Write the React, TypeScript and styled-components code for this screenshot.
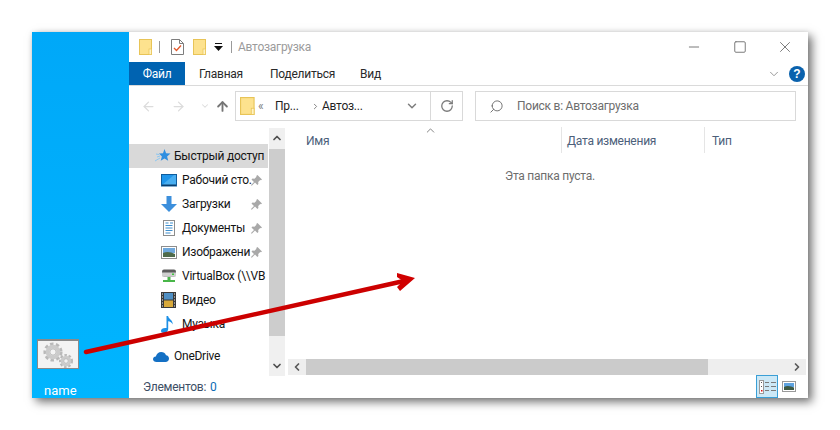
import React from 'react';
import styled, { createGlobalStyle } from 'styled-components';
import { ChevronDown, ChevronUp, ChevronLeft, ChevronRight, ArrowLeft, ArrowRight, ArrowUp, RotateCw, Search, Minus, Square, X } from 'lucide-react';

const GlobalStyle = createGlobalStyle`
  html, body {
    margin: 0;
    padding: 0;
    background: #fff;
  }
  body {
    font-family: Roboto, 'Noto Sans', sans-serif;
    font-size: 12px;
    letter-spacing: -0.25px;
    color: #1a1a1a;
  }
`;

const Page = styled.div`
  position: relative;
  width: 840px;
  height: 430px;
  padding: 32px;
  box-sizing: border-box;
  overflow: hidden;
`;

const Frame = styled.div`
  display: flex;
  width: 776px;
  height: 366px;
  box-shadow: 4px 4px 9px rgba(0, 0, 0, 0.55), 0 0 5px rgba(0, 0, 0, 0.08);
`;

const Desktop = styled.div`
  width: 97px;
  flex: none;
  display: flex;
  flex-direction: column;
  align-items: flex-start;
  justify-content: flex-end;
  padding: 0 0 0 5px;
  box-sizing: border-box;
  background: linear-gradient(#00a8f8, #00b5ff);
`;

const Tile = styled.div`
  width: 42px;
  height: 30px;
  box-sizing: border-box;
  background: #f3f3f3;
  border: 1px solid #8a8a8a;
  border-top-width: 2px;
  display: flex;
  align-items: center;
  justify-content: center;
`;

const TileName = styled.div`
  margin: 14px 0 0 7px;
  height: 15px;
  line-height: 15px;
  font-size: 13px;
  letter-spacing: 0;
  color: #fff;
`;

const Explorer = styled.div`
  flex: 1;
  min-width: 0;
  display: flex;
  flex-direction: column;
  background: #fff;
`;

const TitleBar = styled.div`
  height: 30px;
  flex: none;
  display: flex;
  align-items: center;
  padding-left: 10px;
`;

const QuickIcon = styled.span<{ $gap?: number }>`
  display: inline-flex;
  margin-right: ${(p) => p.$gap ?? 0}px;
`;

const Divider = styled.span<{ $gap: number }>`
  width: 1px;
  height: 12px;
  background: #9a9a9a;
  margin-right: ${(p) => p.$gap}px;
`;

const WindowTitle = styled.span`
  color: #9b9b9b;
  flex: 1;
`;

const WindowControls = styled.div`
  display: flex;
  align-items: center;
  color: #7a7a7a;
`;

const ControlButton = styled.span`
  width: 45.5px;
  height: 30px;
  display: flex;
  align-items: center;
  justify-content: center;
  margin-top: -1px;
`;

const Ribbon = styled.div`
  height: 23px;
  flex: none;
  display: flex;
  align-items: stretch;
  border-bottom: 1px solid #dadada;
`;

const RibbonTab = styled.span<{ $active?: boolean; $width: number }>`
  width: ${(p) => p.$width}px;
  display: flex;
  align-items: center;
  justify-content: center;
  background: ${(p) => (p.$active ? '#0063b1' : 'transparent')};
  color: ${(p) => (p.$active ? '#fff' : '#2a2a2a')};
`;

const RibbonEnd = styled.div`
  margin-left: auto;
  display: flex;
  align-items: center;
  gap: 8px;
  padding-right: 3px;
  color: #8a8a8a;
`;

const HelpBadge = styled.span`
  width: 16px;
  height: 16px;
  border-radius: 50%;
  background: #0a62ad;
  color: #fff;
  font: bold 12px/16px 'Liberation Sans', sans-serif;
  letter-spacing: 0;
  text-align: center;
`;

const NavRow = styled.div`
  height: 41px;
  flex: none;
  display: flex;
  align-items: flex-start;
  padding: 5px 12px 0 12px;
  box-sizing: border-box;
`;

const NavButtons = styled.div`
  width: 94px;
  height: 30px;
  flex: none;
  display: flex;
  align-items: center;
  color: #dcdcdc;
`;

const NavSlot = styled.span<{ $width: number; $dark?: boolean }>`
  width: ${(p) => p.$width}px;
  display: flex;
  color: ${(p) => (p.$dark ? '#757575' : 'inherit')};
`;

const FieldBox = styled.div<{ $width: number }>`
  width: ${(p) => p.$width}px;
  height: 30px;
  flex: none;
  box-sizing: border-box;
  border: 1px solid #d9d9d9;
  display: flex;
  align-items: center;
`;

const Crumbs = styled.div`
  flex: 1;
  display: flex;
  align-items: center;
  padding-left: 4px;
  color: #1f1f1f;
`;

const CrumbMark = styled.span<{ $width: number; $muted?: boolean }>`
  width: ${(p) => p.$width}px;
  flex: none;
  color: ${(p) => (p.$muted ? '#7d7d7d' : 'inherit')};
  display: flex;
`;

const AddressEnd = styled.div`
  width: 31px;
  height: 100%;
  flex: none;
  border-left: 1px solid #d9d9d9;
  display: flex;
  align-items: center;
  justify-content: center;
  color: #7b7b7b;
`;

const SearchBox = styled(FieldBox)`
  margin-left: 12px;
  padding-left: 13px;
  color: #6d6d6d;
  gap: 13px;
`;

const Content = styled.div`
  flex: 1;
  min-height: 0;
  display: flex;
`;

const NavPane = styled.div`
  width: 156px;
  flex: none;
  display: flex;
`;

const Tree = styled.div`
  width: 139px;
  flex: none;
  padding-top: 17px;
  box-sizing: border-box;
`;

const TreeRow = styled.div<{ $selected?: boolean; $indent: number; $gapAbove?: number }>`
  height: 24px;
  margin-top: ${(p) => p.$gapAbove ?? 0}px;
  display: flex;
  align-items: center;
  padding-left: ${(p) => p.$indent}px;
  background: ${(p) => (p.$selected ? '#d9d9d9' : 'transparent')};
  color: #141414;
  white-space: nowrap;
`;

const TreeIcon = styled.span<{ $width: number }>`
  width: ${(p) => p.$width}px;
  flex: none;
  display: flex;
`;

const TreeLabel = styled.span`
  flex: 1;
  min-width: 0;
`;

const PinSlot = styled.span`
  width: 17px;
  flex: none;
  display: flex;
`;

const ScrollY = styled.div`
  width: 16px;
  margin: 1px 0 0 1px;
  flex: none;
  height: 248px;
  background: #f0f0f0;
  display: flex;
  flex-direction: column;
  align-items: center;
  color: #505050;
`;

const ThumbY = styled.div`
  flex: 1;
  width: 100%;
  margin: 1px 0 20px;
  background: #cdcdcd;
`;

const ArrowCap = styled.span`
  height: 20px;
  flex: none;
  display: flex;
  align-items: center;
`;

const FilesPane = styled.div`
  flex: 1;
  min-width: 0;
  margin-left: 3px;
  display: flex;
  flex-direction: column;
`;

const HeaderRow = styled.div`
  position: relative;
  height: 26px;
  flex: none;
  display: flex;
  color: #4c607a;
`;

const HeaderCell = styled.div<{ $width: number; $pad: number; $line?: boolean }>`
  width: ${(p) => p.$width}px;
  flex: none;
  box-sizing: border-box;
  padding: 7px 0 0 ${(p) => p.$pad}px;
  border-right: ${(p) => (p.$line ? '1px solid #e5e5e5' : 'none')};
`;

const SortCaret = styled.span`
  position: absolute;
  left: 136px;
  top: -3px;
  color: #6a6a6a;
  display: flex;
`;

const EmptyArea = styled.div`
  flex: 1;
  padding: 16px 0 0 4px;
  text-align: center;
  color: #6d6d6d;
  box-sizing: border-box;
`;

const ScrollX = styled.div`
  height: 16px;
  flex: none;
  margin: 0 2px 1px 0;
  display: flex;
  align-items: center;
  background: #eeeeee;
  color: #5a5a5a;
`;

const ThumbX = styled.div`
  width: 402px;
  height: 100%;
  background: #cbcbcb;
`;

const XCap = styled.span<{ $end?: boolean }>`
  width: 18px;
  flex: none;
  display: flex;
  justify-content: center;
  margin-left: ${(p) => (p.$end ? 'auto' : '0')};
`;

const StatusBar = styled.div`
  height: 22px;
  flex: none;
  display: flex;
  align-items: center;
  padding-left: 14px;
  color: #3d4f66;
`;

const StatusCount = styled.span`
  margin-left: 4px;
  color: #0b6bb5;
`;

const ViewButtons = styled.div`
  margin-left: auto;
  height: 100%;
  display: flex;
  align-items: center;
  padding-right: 8px;
`;

const ViewButton = styled.span<{ $active?: boolean }>`
  width: 22px;
  height: 23px;
  margin-top: -1px;
  box-sizing: border-box;
  display: flex;
  align-items: center;
  justify-content: center;
  background: ${(p) => (p.$active ? '#cce8f6' : 'transparent')};
  border: 1px solid ${(p) => (p.$active ? '#3a9fd6' : 'transparent')};
`;

const FlippedSearch = styled(Search)`
  transform: scaleX(-1);
`;

const ArrowOverlay = styled.svg`
  position: absolute;
  left: 0;
  top: 0;
  width: 840px;
  height: 430px;
  pointer-events: none;
`;

const Folder = ({ h = 16 }: { h?: number }) => (
  <svg width={(h * 13) / 16} height={h} viewBox="0 0 13 16">
    <rect x="0.5" y="0.5" width="12" height="15" fill="#fde28e" stroke="#e8c457" />
    <rect x="10" y="10" width="2.5" height="5.5" fill="#fff3c4" stroke="#e8c457" strokeWidth="0.7" />
  </svg>
);

const CheckDoc = () => (
  <svg width="13" height="16" viewBox="0 0 13 16">
    <path d="M.5.5h8l4 4v11H.5z" fill="#fff" stroke="#7d7d7d" />
    <path d="M8.5.5v4h4" fill="none" stroke="#7d7d7d" />
    <path d="M3 9l2.5 2.5L10 6.5" fill="none" stroke="#e2582a" strokeWidth="1.3" />
  </svg>
);

const QuickDrop = () => (
  <svg width="9" height="8" viewBox="0 0 9 8">
    <rect x="1" y="0" width="7" height="1" fill="#111" />
    <path d="M0 3h9L4.5 8z" fill="#111" />
  </svg>
);

const StarIcon = () => (
  <svg width="16" height="16" viewBox="0 0 16 16">
    <path d="M9.5 1l1.6 4.3 4.4.3-3.4 2.8 1.1 4.4-3.7-2.4-3.8 2.400 1.2-4.400L4 5.600l4-.3z" fill="#2f8fe0" />
    <path d="M0 13l5-3M2 9l3-1M1 6l3 .5" stroke="#8cc6f0" strokeWidth="1" />
  </svg>
);

const DesktopIcon = () => (
  <svg width="16" height="13" viewBox="0 0 16 13">
    <rect x="0.5" y="0.5" width="15" height="11.5" fill="#1f95ea" stroke="#0f5c9c" />
    <path d="M1 11L13 1h2v10z" fill="#49aef0" />
    <rect x="1" y="10.5" width="14" height="1.5" fill="#0a3f6e" />
  </svg>
);

const DownloadIcon = () => (
  <svg width="16" height="16" viewBox="0 0 16 16">
    <path d="M5.500 0h5v8H16l-8 8-8-8h5.500z" fill="#3c8fdc" />
  </svg>
);

const DocIcon = () => (
  <svg width="16" height="16" viewBox="0 0 16 16">
    <rect x="2.5" y="0.5" width="11" height="15" fill="#fff" stroke="#8d8d8d" />
    <path d="M4.500 3h3M9 3h3M4.500 5.500h7M4.500 8h7M4.500 10.500h7M4.500 13h5" stroke="#3f8fce" strokeWidth="1" />
  </svg>
);

const PictureIcon = () => (
  <svg width="16" height="13" viewBox="0 0 16 13">
    <rect x="0.5" y="0.5" width="15" height="12" fill="#fff" stroke="#8d8d8d" />
    <rect x="2" y="2" width="12" height="5" fill="#6fa8dc" />
    <path d="M2 7c4-2 8-1 12 1v3H2z" fill="#4f6a4a" />
  </svg>
);

const DriveIcon = () => (
  <svg width="16" height="16" viewBox="0 0 16 16">
    <rect x="1" y="1.5" width="14" height="7" rx="2" fill="#5c5c5c" />
    <rect x="1" y="4.5" width="14" height="4" fill="#cfcfcf" />
    <rect x="11" y="5.5" width="2" height="1.5" fill="#3ec43e" />
    <rect x="6.5" y="9" width="3" height="3" fill="#49b649" />
    <rect x="2" y="12" width="12" height="2" fill="#49b649" />
  </svg>
);

const VideoIcon = () => (
  <svg width="15" height="16" viewBox="0 0 15 16">
    <rect x="0" y="0" width="15" height="16" fill="#3a3a3a" />
    <rect x="3" y="1" width="9" height="6.5" fill="#4f8fc4" />
    <rect x="3" y="8.5" width="9" height="6.5" fill="#d8a93a" />
    <path d="M1 2h1M1 5h1M1 8h1M1 11h1M1 14h1M13 2h1M13 5h1M13 8h1M13 11h1M13 14h1" stroke="#eee" />
  </svg>
);

const MusicIcon = () => (
  <svg width="13" height="17" viewBox="0 0 13 17">
    <path d="M5.500 0h1.600c.3 3 5 4 4.600 8.500C11 6.500 9 5.500 7.200 5.200V13c0 2.200-2 4-4.200 4C1 17 0 16 0 14.700 0 12.800 2.500 11.500 5.500 12z" fill="#1e90e6" />
  </svg>
);

const CloudIcon = () => (
  <svg width="16" height="11" viewBox="0 0 16 11">
    <path d="M3.500 11C1.500 11 0 9.800 0 8.200 0 6.700 1.200 5.600 2.800 5.500 3.500 2.800 5.600 1 8.200 1c2.200 0 4 1.200 4.800 3.200 1.700.2 3 1.600 3 3.300 0 2-1.500 3.500-3.500 3.500z" fill="#1470c4" />
  </svg>
);

const PinIcon = () => (
  <svg width="11" height="11" viewBox="0 0 11 11">
    <path d="M6.500 0L11 4.500l-1 .8-.8-.3-2 2 .2 2-1 1L4 7.500 1 10.500 0 10.500 0 10l3-3-2.500-2.500 1-1 2 .2 2-2-.3-.8z" fill="#a9a9a9" />
  </svg>
);

const Gear = ({ cx, cy, r }: { cx: number; cy: number; r: number }) => (
  <g>
    <circle cx={cx} cy={cy} r={r} fill="none" stroke="#b9b9b9" strokeWidth={r * 0.55} strokeDasharray={`${r * 0.42} ${r * 0.3}`} />
    <circle cx={cx} cy={cy} r={r * 0.72} fill="none" stroke="#cbcbcb" strokeWidth={r * 0.5} />
    <circle cx={cx} cy={cy} r={r * 0.42} fill="none" stroke="#a8a8a8" strokeWidth={0.7} />
  </g>
);

const Gears = () => (
  <svg width="36" height="26" viewBox="0 0 36 26">
    <Gear cx={13} cy={10} r={7.5} />
    <Gear cx={26} cy={19} r={5.5} />
  </svg>
);

const DetailsView = () => (
  <svg width="17" height="14" viewBox="0 0 17 14">
    <rect x="0.5" y="0.5" width="4" height="13" fill="#fff" stroke="#9a9a9a" />
    <rect x="2" y="2" width="1" height="1" fill="#555" />
    <rect x="2" y="6" width="1" height="1" fill="#555" />
    <rect x="2" y="10" width="1.5" height="1.5" fill="#e01010" />
    <path d="M6 2.500h4M12 2.500h5M6 6.500h4M12 6.500h5M6 10.500h4M12 10.500h5" stroke="#7a7a7a" />
  </svg>
);

const TilesView = () => (
  <svg width="14" height="11" viewBox="0 0 14 11">
    <rect x="0.5" y="0.5" width="13" height="10" fill="#fff" stroke="#9a9a9a" />
    <rect x="2" y="2" width="10" height="4" fill="#5ea3e0" />
    <path d="M2 6c3-2 7-1 10 .500V9H2z" fill="#3d5a44" />
  </svg>
);

const treeItems = [
  { label: 'Рабочий сто.', icon: <DesktopIcon />, pin: true },
  { label: 'Загрузки', icon: <DownloadIcon />, pin: true },
  { label: 'Документы', icon: <DocIcon />, pin: true },
  { label: 'Изображени', icon: <PictureIcon />, pin: true },
  { label: 'VirtualBox (\\\\VB', icon: <DriveIcon /> },
  { label: 'Видео', icon: <VideoIcon /> },
  { label: 'Музыка', icon: <MusicIcon /> },
];

export default function App() {
  return (
    <Page>
      <GlobalStyle />
      <Frame>
        <Desktop>
          <Tile>
            <Gears />
          </Tile>
          <TileName>name</TileName>
        </Desktop>
        <Explorer>
          <TitleBar>
            <QuickIcon $gap={7}>
              <Folder />
            </QuickIcon>
            <Divider $gap={11} />
            <QuickIcon $gap={9}>
              <CheckDoc />
            </QuickIcon>
            <QuickIcon $gap={8}>
              <Folder />
            </QuickIcon>
            <QuickIcon $gap={8}>
              <QuickDrop />
            </QuickIcon>
            <Divider $gap={6} />
            <WindowTitle>Автозагрузка</WindowTitle>
            <WindowControls>
              <ControlButton>
                <Minus size={16} strokeWidth={1.5} />
              </ControlButton>
              <ControlButton>
                <Square size={14} strokeWidth={1.7} />
              </ControlButton>
              <ControlButton>
                <X size={18} strokeWidth={1.3} />
              </ControlButton>
            </WindowControls>
          </TitleBar>
          <Ribbon>
            <RibbonTab $active $width={56}>Файл</RibbonTab>
            <RibbonTab $width={72}>Главная</RibbonTab>
            <RibbonTab $width={91}>Поделиться</RibbonTab>
            <RibbonTab $width={45}>Вид</RibbonTab>
            <RibbonEnd>
              <ChevronDown size={14} strokeWidth={1.5} />
              <HelpBadge>?</HelpBadge>
            </RibbonEnd>
          </Ribbon>
          <NavRow>
            <NavButtons>
              <NavSlot $width={30}>
                <ArrowLeft size={15} strokeWidth={2} />
              </NavSlot>
              <NavSlot $width={29}>
                <ArrowRight size={15} strokeWidth={2} />
              </NavSlot>
              <NavSlot $width={15}>
                <ChevronDown size={10} strokeWidth={2.5} />
              </NavSlot>
              <NavSlot $width={16} $dark>
                <ArrowUp size={15} strokeWidth={3} />
              </NavSlot>
            </NavButtons>
            <FieldBox $width={228}>
              <Crumbs>
                <CrumbMark $width={18}>
                  <Folder h={18} />
                </CrumbMark>
                <CrumbMark $width={17} $muted>«</CrumbMark>
                <CrumbMark $width={36}>Пр...</CrumbMark>
                <CrumbMark $width={11} $muted>
                  <ChevronRight size={9} strokeWidth={2.5} />
                </CrumbMark>
                <span>Автоз...</span>
              </Crumbs>
              <CrumbMark $width={25} $muted>
                <ChevronDown size={14} strokeWidth={2.5} />
              </CrumbMark>
              <AddressEnd>
                <RotateCw size={14} strokeWidth={2.2} />
              </AddressEnd>
            </FieldBox>
            <SearchBox $width={321}>
              <FlippedSearch size={15} strokeWidth={1.5} />
              <span>Поиск в: Автозагрузка</span>
            </SearchBox>
          </NavRow>
          <Content>
            <NavPane>
              <Tree>
                <TreeRow $selected $indent={26}>
                  <TreeIcon $width={19}>
                    <StarIcon />
                  </TreeIcon>
                  <TreeLabel>Быстрый доступ</TreeLabel>
                </TreeRow>
                {treeItems.map((item) => (
                  <TreeRow key={item.label} $indent={32}>
                    <TreeIcon $width={21}>{item.icon}</TreeIcon>
                    <TreeLabel>{item.label}</TreeLabel>
                    {item.pin && (
                      <PinSlot>
                        <PinIcon />
                      </PinSlot>
                    )}
                  </TreeRow>
                ))}
                <TreeRow $indent={24} $gapAbove={8}>
                  <TreeIcon $width={21}>
                    <CloudIcon />
                  </TreeIcon>
                  <TreeLabel>OneDrive</TreeLabel>
                </TreeRow>
              </Tree>
              <ScrollY>
                <ArrowCap>
                  <ChevronUp size={12} strokeWidth={3.5} />
                </ArrowCap>
                <ThumbY />
                <ArrowCap>
                  <ChevronDown size={12} strokeWidth={3.5} />
                </ArrowCap>
              </ScrollY>
            </NavPane>
            <FilesPane>
              <HeaderRow>
                <SortCaret>
                  <ChevronUp size={13} strokeWidth={1.5} />
                </SortCaret>
                <HeaderCell $width={274} $pad={18} $line>Имя</HeaderCell>
                <HeaderCell $width={143} $pad={5} $line>Дата изменения</HeaderCell>
                <HeaderCell $width={100} $pad={7}>Тип</HeaderCell>
              </HeaderRow>
              <EmptyArea>Эта папка пуста.</EmptyArea>
              <ScrollX>
                <XCap>
                  <ChevronLeft size={12} strokeWidth={3.5} />
                </XCap>
                <ThumbX />
                <XCap $end>
                  <ChevronRight size={12} strokeWidth={3.5} />
                </XCap>
              </ScrollX>
            </FilesPane>
          </Content>
          <StatusBar>
            Элементов:<StatusCount>0</StatusCount>
            <ViewButtons>
              <ViewButton $active>
                <DetailsView />
              </ViewButton>
              <ViewButton>
                <TilesView />
              </ViewButton>
            </ViewButtons>
          </StatusBar>
        </Explorer>
      </Frame>
      <ArrowOverlay viewBox="0 0 840 430">
        <path d="M86 352L404 281" stroke="#cc0000" strokeWidth="4.5" strokeLinecap="round" />
        <path d="M415 278L397 273L397 277L403 281L397 287L400 291z" fill="#d00000" />
      </ArrowOverlay>
    </Page>
  );
}
